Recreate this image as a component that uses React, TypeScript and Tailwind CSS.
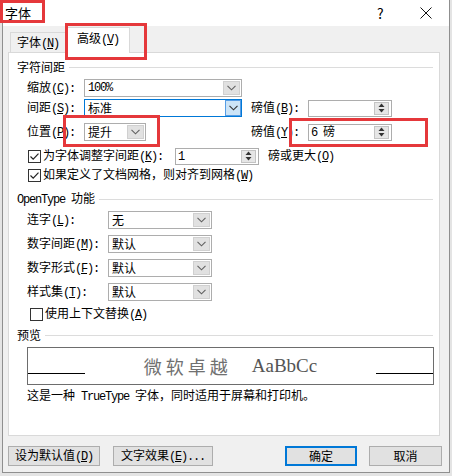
import React from "react";

const L = ({ children }: { children: React.ReactNode }) => (
  <span className="font-['Liberation_Mono'] text-[12px] tracking-[-1.2px]">{children}</span>
);

const Lbl = ({ t, k, colon = true }: { t: string; k: string; colon?: boolean }) => (
  <span className="whitespace-nowrap">
    {t}
    <L>
      (<u>{k}</u>){colon ? ":" : ""}
    </L>
  </span>
);

const Chevron = ({ color = "#606060" }: { color?: string }) => (
  <svg width="9" height="6" viewBox="0 0 9 6">
    <path d="M0.5 0.8 L4.5 4.8 L8.5 0.8" fill="none" stroke={color} strokeWidth="1.1" />
  </svg>
);

const Combo = ({
  className,
  children,
  focus = false,
}: {
  className: string;
  children?: React.ReactNode;
  focus?: boolean;
}) => (
  <div
    className={`flex h-[18px] bg-white border items-stretch ${
      focus ? "border-[#0078d7]" : "border-[#adadad]"
    } ${className}`}
  >
    <div className="flex-1 pl-[3px] flex items-center leading-[16px] whitespace-nowrap">{children}</div>
    {focus ? (
      <div className="w-[16px] bg-[#cce4f7] border border-[#569de5] flex items-center justify-center">
        <Chevron color="#333" />
      </div>
    ) : (
      <div className="w-[17px] m-[1px] bg-[#e1e1e1] border border-[#d0d0d0] flex items-center justify-center">
        <Chevron />
      </div>
    )}
  </div>
);

const Spin = ({ className, children }: { className: string; children?: React.ReactNode }) => (
  <div className={`flex h-[17px] bg-white border border-[#adadad] items-center ${className}`}>
    <div className="flex-1 pl-[2px] leading-[15px] whitespace-nowrap">{children}</div>
    <div className="w-[15px] h-[13px] mr-[2px] bg-[#e6e6e6] border border-[#c4c4c4] flex flex-col items-center justify-center gap-[2px]">
      <svg width="7" height="4" viewBox="0 0 7 4">
        <path d="M0.5 4 L3.5 0.5 L6.5 4Z" fill="#333" />
      </svg>
      <svg width="7" height="4" viewBox="0 0 7 4">
        <path d="M0.5 0 L3.5 3.5 L6.5 0Z" fill="#333" />
      </svg>
    </div>
  </div>
);

const Check = ({ checked }: { checked: boolean }) => (
  <span className="w-[13px] h-[13px] border border-[#333] bg-white flex items-center justify-center shrink-0">
    {checked && (
      <svg width="11" height="11" viewBox="0 0 11 11">
        <path d="M1.5 5.5 L4.2 8.2 L9.5 2.6" fill="none" stroke="#222" strokeWidth="1.2" />
      </svg>
    )}
  </span>
);

const Group = ({ children }: { children: React.ReactNode }) => (
  <div className="h-[16px] flex items-center pr-[6px]">
    <span className="whitespace-nowrap leading-[16px]">{children}</span>
    <div className="flex-1 h-px bg-[#dcdcdc] ml-[4px]" />
  </div>
);

export default function App() {
  return (
    <div className="relative w-[452px] h-[476px] bg-[#e4e4e4] overflow-hidden font-['Noto_Sans_CJK_SC',sans-serif] text-[12px] text-black">
      <div className="ml-[2px] w-[448px] h-[473px] bg-[#f0f0f0] border-l border-r border-b border-[#8f8f8f] flex flex-col">
        {/* Title bar */}
        <div className="h-[26px] bg-white flex items-center shrink-0">
          <span className="pl-[2px] text-[13px] leading-[16px]">字体</span>
          <div className="flex-1" />
          <span className="text-[14px] leading-[16px] w-[8px]">?</span>
          <div className="w-[35px]" />
          <svg width="12" height="12" viewBox="0 0 12 12" className="mr-[17px]">
            <path d="M0.5 0.5 L11.5 11.5 M11.5 0.5 L0.5 11.5" stroke="#111" strokeWidth="1" />
          </svg>
        </div>
        {/* Tabs */}
        <div className="h-[26px] flex items-end pl-[7px] shrink-0">
          <div className="h-[20px] w-[56px] border border-b-0 border-[#d9d9d9] bg-[#f0f0f0] flex items-center justify-center leading-[16px]">
            <Lbl t="字体" k="N" colon={false} />
          </div>
          <div className="relative z-10 h-[26px] -mb-px w-[64px] bg-white border border-b-0 border-[#d9d9d9] flex items-center justify-center leading-[16px] pb-[4px]">
            <Lbl t="高级" k="V" colon={false} />
          </div>
        </div>
        {/* Panel */}
        <div className="ml-[5px] w-[432px] h-[384px] bg-white border border-[#d9d9d9] flex flex-col pl-[8px] shrink-0">
          <div className="mt-[6px]">
            <Group>字符间距</Group>
          </div>
          {/* 缩放 */}
          <div className="mt-[3px] h-[20px] flex items-center pl-[10px]">
            <div className="w-[57px]">
              <Lbl t="缩放" k="C" />
            </div>
            <Combo className="w-[158px]">
              <L>100%</L>
            </Combo>
          </div>
          {/* 间距 */}
          <div className="h-[20px] flex items-center pl-[10px]">
            <div className="w-[57px]">
              <Lbl t="间距" k="S" />
            </div>
            <Combo className="w-[158px]" focus>
              标准
            </Combo>
            <div className="w-[57px] ml-[9px]">
              <Lbl t="磅值" k="B" />
            </div>
            <Spin className="w-[84px]" />
          </div>
          {/* 位置 */}
          <div className="mt-[4px] h-[20px] flex items-center pl-[10px]">
            <div className="w-[57px]">
              <Lbl t="位置" k="P" />
            </div>
            <Combo className="w-[62px]">提升</Combo>
            <div className="w-[57px] ml-[105px]">
              <Lbl t="磅值" k="Y" />
            </div>
            <Spin className="w-[84px]">
              <L>6 </L>磅
            </Spin>
          </div>
          {/* checkbox 1 */}
          <div className="mt-[4px] h-[20px] flex items-center pl-[11px]">
            <Check checked />
            <div className="ml-[2px] w-[132px]">
              <span className="whitespace-nowrap">
                为字体调整字间距
                <L>
                  (<u>K</u>):
                </L>
              </span>
            </div>
            <Spin className="w-[84px]">
              <L>1</L>
            </Spin>
            <div className="ml-[9px]">
              <Lbl t="磅或更大" k="O" colon={false} />
            </div>
          </div>
          {/* checkbox 2 */}
          <div className="h-[18px] flex items-center pl-[11px]">
            <Check checked />
            <div className="ml-[2px]">
              <Lbl t="如果定义了文档网格，则对齐到网格" k="W" colon={false} />
            </div>
          </div>
          {/* OpenType */}
          <div className="mt-[7px]">
            <Group>
              <L>OpenType </L>功能
            </Group>
          </div>
          <div className="mt-[3px] h-[20px] flex items-center pl-[10px]">
            <div className="w-[81px]">
              <Lbl t="连字" k="L" />
            </div>
            <Combo className="w-[104px]">无</Combo>
          </div>
          <div className="mt-[4px] h-[20px] flex items-center pl-[10px]">
            <div className="w-[81px]">
              <Lbl t="数字间距" k="M" />
            </div>
            <Combo className="w-[104px]">默认</Combo>
          </div>
          <div className="mt-[4px] h-[20px] flex items-center pl-[10px]">
            <div className="w-[81px]">
              <Lbl t="数字形式" k="F" />
            </div>
            <Combo className="w-[104px]">默认</Combo>
          </div>
          <div className="mt-[4px] h-[20px] flex items-center pl-[10px]">
            <div className="w-[81px]">
              <Lbl t="样式集" k="T" />
            </div>
            <Combo className="w-[104px]">默认</Combo>
          </div>
          <div className="mt-[3px] h-[18px] flex items-center pl-[13px]">
            <Check checked={false} />
            <div className="ml-[2px]">
              <Lbl t="使用上下文替换" k="A" colon={false} />
            </div>
          </div>
          {/* 预览 */}
          <div className="mt-[4px]">
            <Group>预览</Group>
          </div>
          <div className="mt-[4px] ml-[10px] w-[407px] h-[38px] border border-[#6d6d6d] flex items-stretch">
            <div className="w-[57px] flex items-end pb-[10px]">
              <div className="w-full h-px bg-black" />
            </div>
            <div className="flex-1 flex items-center justify-center text-[#707070]">
              <span className="text-[18px] tracking-[4px] leading-[20px]">微软卓越</span>
              <span className="ml-[20px] font-['Liberation_Serif'] text-[19px] leading-[20px] text-[#555]">AaBbCc</span>
            </div>
            <div className="w-[57px] flex items-end pb-[10px]">
              <div className="w-full h-px bg-black" />
            </div>
          </div>
          <div className="mt-[2px] ml-[10px] h-[16px] leading-[16px] whitespace-nowrap">
            这是一种<L> TrueType </L>字体，同时适用于屏幕和打印机。
          </div>
        </div>
        {/* Buttons */}
        <div className="mt-[10px] h-[20px] flex items-stretch pl-[5px] pr-[7px]">
          <button className="w-[92px] bg-[#e1e1e1] border border-[#adadad] flex items-center justify-center leading-[16px]">
            <Lbl t="设为默认值" k="D" colon={false} />
          </button>
          <button className="ml-[13px] w-[100px] bg-[#e1e1e1] border border-[#adadad] flex items-center justify-center leading-[16px]">
            <span className="whitespace-nowrap">
              文字效果
              <L>
                (<u>E</u>)...
              </L>
            </span>
          </button>
          <div className="flex-1" />
          <button className="w-[72px] bg-[#e1e1e1] border-2 border-[#0078d7] flex items-center justify-center leading-[16px]">
            确定
          </button>
          <button className="ml-[12px] w-[73px] bg-[#e1e1e1] border border-[#adadad] flex items-center justify-center leading-[16px]">
            取消
          </button>
        </div>
      </div>

      {/* Red annotation boxes */}
      <div className="absolute left-0 top-0 w-[45px] h-[23px] border-[3px] border-[#e5383b] pointer-events-none" />
      <div className="absolute left-[65px] top-[23px] w-[82px] h-[37px] border-[3px] border-[#e5383b] pointer-events-none z-20" />
      <div className="absolute left-[63px] top-[115px] w-[97px] h-[32px] border-[3px] border-[#e5383b] pointer-events-none" />
      <div className="absolute left-[289px] top-[118px] w-[139px] h-[29px] border-[3px] border-[#e5383b] pointer-events-none" />
    </div>
  );
}
